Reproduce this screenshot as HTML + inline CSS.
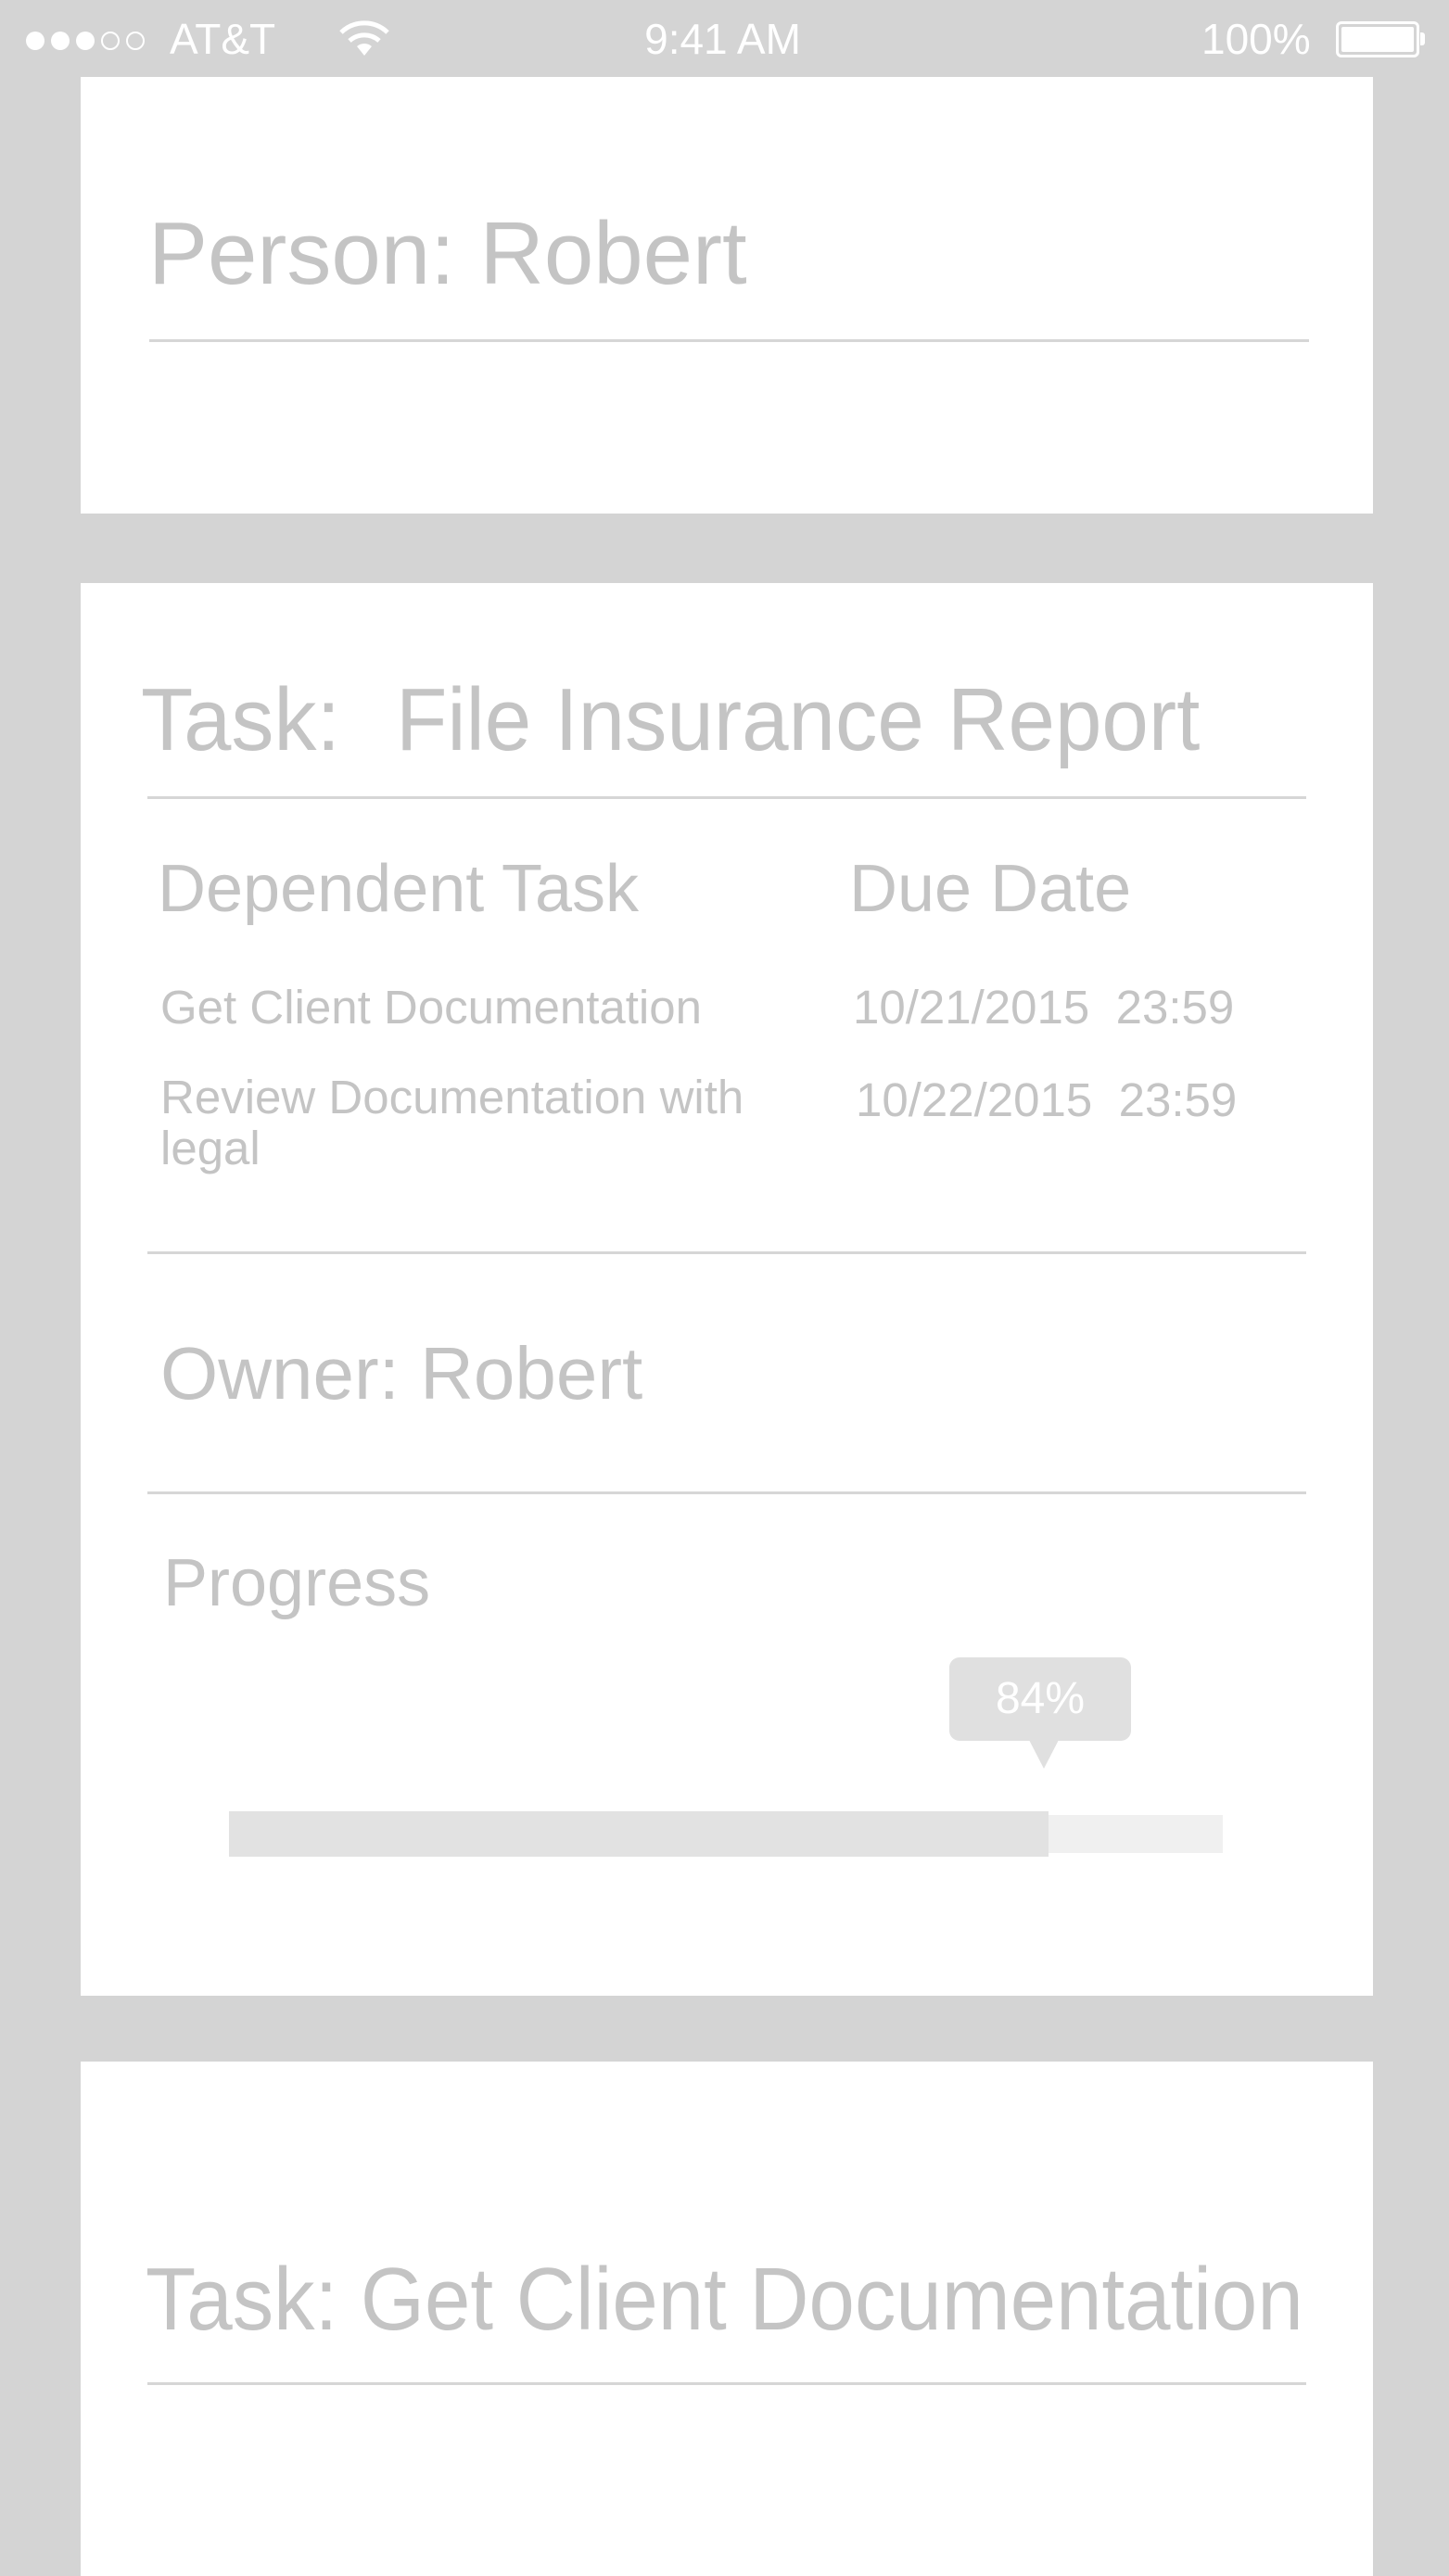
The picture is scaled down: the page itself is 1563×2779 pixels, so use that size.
<!DOCTYPE html>
<html><head><meta charset="utf-8"><style>
*{margin:0;padding:0;box-sizing:border-box}
html{width:1563px;height:2779px;overflow:hidden}
body{width:1563px;height:2779px;background:#d4d4d4;position:relative;overflow:hidden;font-family:"Liberation Sans",Helvetica,Arial,sans-serif;color:#c4c4c4}
.a{position:absolute;white-space:nowrap;line-height:1}
.card{position:absolute;left:87px;width:1394px;background:#fff}
.ln{position:absolute;height:3px;background:#d6d6d6}
.sb{color:#fff;font-size:46px}
</style></head><body>
<div class="a" style="left:27px;top:32px;">
<svg width="150" height="24" viewBox="0 0 150 24">
<circle cx="11" cy="12" r="10" fill="#fff"/><circle cx="38" cy="12" r="10" fill="#fff"/><circle cx="65" cy="12" r="10" fill="#fff"/>
<circle cx="92" cy="12" r="9" fill="none" stroke="#fff" stroke-width="2"/><circle cx="119" cy="12" r="9" fill="none" stroke="#fff" stroke-width="2"/></svg></div>
<div class="a sb" style="left:183px;top:19px;">AT&amp;T</div>
<svg class="a" style="left:364px;top:22px" width="58" height="40" viewBox="0 0 58 40">
<path d="M4 13 A36 36 0 0 1 54 13" fill="none" stroke="#fff" stroke-width="5"/>
<path d="M13 22 A24 24 0 0 1 45 22" fill="none" stroke="#fff" stroke-width="5"/>
<path d="M29 38 L21 28 A12 12 0 0 1 37 28 Z" fill="#fff"/></svg>
<div class="a sb" style="left:0;width:1563px;text-align:center;top:19px;padding-right:4px">9:41 AM</div>
<div class="a sb" style="left:1296px;top:19px;">100%</div>
<div class="a" style="left:1441px;top:23px;width:90px;height:39px;border:3px solid #fff;border-radius:6px;padding:3px"><div style="width:100%;height:100%;background:#fff;border-radius:2px"></div></div>
<div class="a" style="left:1532px;top:35px;width:5px;height:14px;background:#fff;border-radius:0 3px 3px 0"></div>

<div class="card" style="top:83px;height:471px"></div>
<div class="a" style="left:160px;top:226px;font-size:96px">Person: Robert</div>
<div class="ln" style="left:161px;top:366px;width:1251px"></div>

<div class="card" style="top:629px;height:1524px"></div>
<div class="a" style="left:152px;top:729px;font-size:96px;transform:scaleX(0.96);transform-origin:left">Task:</div>
<div class="a" style="left:427px;top:729px;font-size:96px;transform:scaleX(0.945);transform-origin:left">File Insurance Report</div>
<div class="ln" style="left:159px;top:859px;width:1250px"></div>
<div class="a" style="left:170px;top:923px;font-size:72px">Dependent Task</div>
<div class="a" style="left:916px;top:923px;font-size:72px">Due Date</div>
<div class="a" style="left:173px;top:1061px;font-size:51px">Get Client Documentation</div>
<div class="a" style="left:920px;top:1061px;font-size:51px">10/21/2015&nbsp; 23:59</div>
<div class="a" style="left:173px;top:1156px;font-size:51px;line-height:55px;white-space:normal;width:700px">Review Documentation with<br>legal</div>
<div class="a" style="left:923px;top:1161px;font-size:51px">10/22/2015&nbsp; 23:59</div>
<div class="ln" style="left:159px;top:1350px;width:1250px"></div>
<div class="a" style="left:173px;top:1442px;font-size:80px">Owner: Robert</div>
<div class="ln" style="left:159px;top:1609px;width:1250px"></div>
<div class="a" style="left:176px;top:1672px;font-size:72px">Progress</div>
<div class="a" style="left:1024px;top:1788px;width:196px;height:90px;background:#e0e0e0;border-radius:11px"></div>
<svg class="a" style="left:1110px;top:1877px" width="32" height="32" viewBox="0 0 32 32"><path d="M0 0 L32 0 L16 31 Z" fill="#e0e0e0"/></svg>
<div class="a" style="left:1024px;width:196px;text-align:center;top:1809px;font-size:48px;color:#fff">84%</div>
<div class="a" style="left:1131px;top:1958px;width:188px;height:41px;background:#f0f0f0"></div>
<div class="a" style="left:247px;top:1954px;width:884px;height:49px;background:#e2e2e2"></div>

<div class="card" style="top:2224px;height:555px"></div>
<div class="a" style="left:157px;top:2433px;font-size:96px;transform:scaleX(0.925);transform-origin:left">Task: Get Client Documentation</div>
<div class="ln" style="left:159px;top:2570px;width:1250px"></div>
</body></html>
